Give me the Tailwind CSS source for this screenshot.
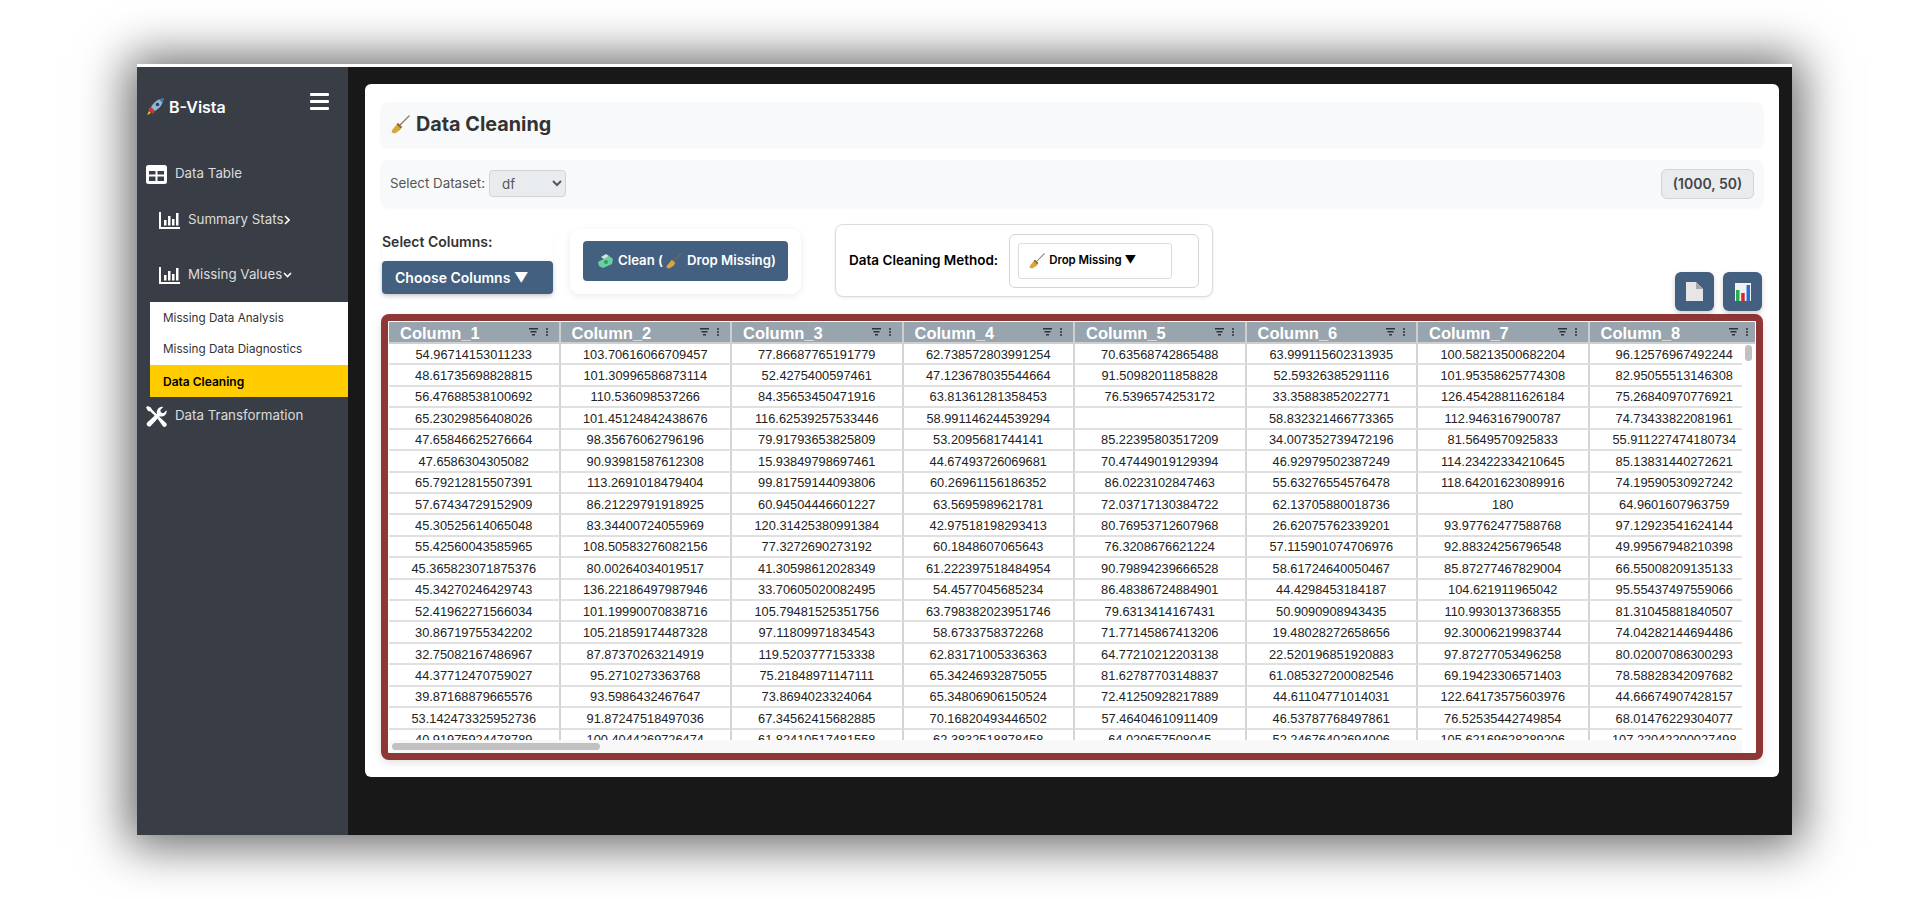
<!DOCTYPE html>
<html lang="en">
<head>
    <meta charset="UTF-8">
    <script src="https://cdn.jsdelivr.net/npm/@tailwindcss/browser@4"></script>
    <title>B-Vista</title>
</head>
<body class="bg-white font-['Inter',sans-serif] overflow-hidden">
    <div class="pt-[64px] pl-[137px] h-[899px]">
        <div class="w-[1655px] h-[771px] border-t-[3px] border-white flex shadow-[0_2px_45px_9px_rgba(0,0,0,0.6)]">

            <!-- Sidebar -->
            <aside class="w-[211px] bg-[#393e46] text-[#dcdcdc] text-[13.33px] shrink-0">
                <div class="h-[94px] pl-[9px] pr-[19px] flex items-start justify-between">
                    <div class="flex items-center gap-[5px] mt-[28px] text-white font-semibold text-[16px] leading-[24px]">
                        <svg class="w-[18px] h-[18px]" viewBox="0 0 18 18">
                            <path d="M2 11l3-2 4 4-2 3z" fill="#d8342c"/>
                            <path d="M1 17l2-4 2 2z" fill="#f6c21c"/>
                            <path d="M5 9C8 4 12 1 17.500 .5 17 6 14 10 9 13z" fill="#8fb8d8"/>
                            <path d="M13 1.500c1.500-.6 3-.9 4.500-1-.1 1.500-.4 3-1 4.500z" fill="#3c79b8"/>
                            <circle cx="11.500" cy="6.500" r="1.800" fill="#3b3f45"/>
                        </svg>
                        <span>B-Vista</span>
                    </div>
                    <svg class="w-[19px] h-[17px] mt-[26px]" viewBox="0 0 19 17" fill="#fff">
                        <rect y="0" width="19" height="3" rx="1"/><rect y="7" width="19" height="3" rx="1"/><rect y="14" width="19" height="3" rx="1"/>
                    </svg>
                </div>

                <div class="h-[26px] pl-[9px] flex items-center gap-[8px]">
                    <svg class="w-[21px] h-[19px]" viewBox="0 0 21 19" fill="#fff">
                        <path fill-rule="evenodd" d="M2.500 0h16A2.500 2.500 0 0 1 21 2.500v14a2.500 2.500 0 0 1-2.500 2.500h-16A2.500 2.500 0 0 1 0 16.500v-14A2.500 2.500 0 0 1 2.500 0zM3 6v3.500h6.500V6zm8.500 0v3.500H18V6zM3 11.500V16h6.500v-4.500zm8.500 0V16H18v-4.500z"/>
                    </svg>
                    <span>Data Table</span>
                </div>

                <div class="mt-[20px] h-[26px] pl-[22px] flex items-center gap-[8px]">
                    <svg class="w-[21px] h-[17px]" viewBox="0 0 21 17" fill="#fff">
                        <path d="M0 0h2v15h19v2H0z"/><rect x="5" y="8" width="2.500" height="5.500"/><rect x="9" y="4" width="2.500" height="9.500"/><rect x="13" y="7" width="2.500" height="6.500"/><rect x="17" y="1" width="2.500" height="12.500"/>
                    </svg>
                    <span>Summary Stats</span>
                    <svg class="w-[6px] h-[10px] -ml-[7px]" viewBox="0 0 6 10" fill="none" stroke="#fff" stroke-width="1.600"><path d="M1 1l4 4-4 4"/></svg>
                </div>

                <div class="mt-[29px] h-[26px] pl-[22px] flex items-center gap-[8px]">
                    <svg class="w-[21px] h-[17px]" viewBox="0 0 21 17" fill="#fff">
                        <path d="M0 0h2v15h19v2H0z"/><rect x="5" y="8" width="2.500" height="5.500"/><rect x="9" y="4" width="2.500" height="9.500"/><rect x="13" y="7" width="2.500" height="6.500"/><rect x="17" y="1" width="2.500" height="12.500"/>
                    </svg>
                    <span>Missing Values</span>
                    <svg class="w-[9px] h-[6px] -ml-[7px]" viewBox="0 0 9 6" fill="none" stroke="#fff" stroke-width="1.600"><path d="M1 1l3.500 3.500L8 1"/></svg>
                </div>

                <div class="ml-[13px] mt-[14px] text-[11.7px] text-[#333]">
                    <div class="h-[32px] pl-[13px] pt-px bg-white flex items-center">Missing Data Analysis</div>
                    <div class="h-[31px] pl-[13px] pt-px bg-white flex items-center">Missing Data Diagnostics</div>
                    <div class="h-[32px] pl-[13px] pt-px bg-[#ffcc00] text-black text-[12px] font-semibold flex items-center">Data Cleaning</div>
                </div>

                <div class="mt-[6px] h-[26px] pl-[9px] flex items-center gap-[8px]">
                    <svg class="w-[21px] h-[21px]" viewBox="0 0 21 21" fill="#fff">
                        <path d="M1.500 0L0 1.500 2 5l2.500.5 5 5 1.700-1.700-5-5L4.800 1.500z"/>
                        <path d="M11.500 12.500l1.800-1.800 7 6.500a2.300 2.300 0 0 1-3.200 3.200z"/>
                        <path d="M20.500 4.200l-3 3-2.600-.6-.6-2.600 3-3A5.200 5.200 0 0 0 11 7.500L1 16.800A2.600 2.600 0 0 0 4.500 20.300L13.800 10.300A5.200 5.200 0 0 0 20.500 4.200z"/>
                    </svg>
                    <span>Data Transformation</span>
                </div>
            </aside>

            <!-- Main -->
            <main class="flex-1 bg-[#181818] pl-[17px] pr-[13px] pt-[17px]">
                <div class="w-[1414px] h-[693px] bg-white rounded-[6px] px-[16px] pt-[18px]">

                    <div class="h-[45px] bg-[#f8f9fa] rounded-[8px] shadow-[0_1px_3px_rgba(0,0,0,0.05)] pl-[10px] flex items-center gap-[6px]">
                        <svg class="w-[19px] h-[19px]" viewBox="0 0 19 19">
                            <path d="M8 11L18.500 .5" stroke="#8a7a66" stroke-width="1.200"/>
                            <path d="M7 8l4 4-2 3-5 3.500-3.500-1 1-3z" fill="#d9a63c"/>
                            <path d="M7 8l4 4-1.200 1.600-4.300-4.300z" fill="#8c6a2c"/>
                        </svg>
                        <h1 class="text-[19.8px] font-bold text-[#333]">Data Cleaning</h1>
                    </div>

                    <div class="mt-[13px] h-[47px] bg-[#f8f9fa] rounded-[8px] shadow-[0_1px_3px_rgba(0,0,0,0.05)] pl-[9px] pr-[9px] flex items-center text-[13.33px] text-[#555]">
                        <span>Select Dataset:</span>
                        <select class="ml-[4px] w-[77px] h-[27px] pl-[8px] bg-[#e9ecef] border border-[#ced4da] rounded-[4px] text-[13.33px] text-[#555]">
                            <option>df</option>
                        </select>
                        <div class="ml-auto w-[93px] h-[30px] bg-[#e9ecef] border border-[#ced4da] rounded-[6px] flex items-center justify-center text-[14px] font-semibold text-[#444]">(1000, 50)</div>
                    </div>

                    <div class="mt-[17px] h-[90px] flex items-start">
                        <div class="ml-px w-[171px] mt-[8px] shrink-0 rounded-[6px] shadow-[0_1px_3px_rgba(0,0,0,0.05)]">
                            <div class="h-[20px] text-[14px] leading-[20px] font-semibold text-[#333]">Select Columns:</div>
                            <button class="mt-[9px] w-[171px] h-[33px] pl-[13px] bg-[#436080] rounded-[4px] shadow-[0_2px_5px_rgba(0,0,0,0.2)] text-white text-left text-[14px] font-semibold">Choose Columns ▼</button>
                        </div>

                        <div class="ml-[17px] mt-[5px] w-[231px] h-[65px] rounded-[10px] shadow-[0_2px_8px_rgba(0,0,0,0.08)] px-[13px] pt-[12px]">
                            <button class="w-[205px] h-[40px] bg-[#436080] rounded-[4px] text-white text-[13.2px] font-semibold flex items-center pl-[14px]">
                                <svg class="w-[17px] h-[15px] mr-[4px]" viewBox="0 0 17 15">
                                    <path d="M1 8l11-6 4 3-1 5-9 4-4-2z" fill="#66d19e"/>
                                    <path d="M4 3l5-3 3 2-5 3z" fill="#cfe8dc"/>
                                    <circle cx="9" cy="8" r="2" fill="#3a9a6c"/>
                                </svg>
                                <span>Clean (</span>
                                <svg class="w-[16px] h-[16px] mx-[3px]" viewBox="0 0 19 19">
                                    <path d="M8 11L18.500 .5" stroke="#6f6a60" stroke-width="1.200"/>
                                    <path d="M7 8l4 4-2 3-5 3.500-3.500-1 1-3z" fill="#d9a63c"/>
                                </svg>
                                <span class="ml-[2px]">Drop Missing)</span>
                            </button>
                        </div>

                        <div class="ml-[34px] w-[378px] h-[73px] bg-white border border-[#dcdcdc] rounded-[8px] shadow-[0_1px_3px_rgba(0,0,0,0.08)] pl-[13px] flex items-center">
                            <span class="text-[13.5px] font-semibold text-black">Data Cleaning Method:</span>
                            <div class="ml-[11px] w-[190px] h-[54px] border border-[#d4d4d4] rounded-[6px] pl-[8px] flex items-center">
                                <div class="w-[154px] h-[36px] border border-[#dcdcdc] rounded-[3px] pl-[10px] flex items-center gap-[4px] text-[11.4px] font-semibold text-black">
                                    <svg class="w-[16px] h-[16px]" viewBox="0 0 19 19">
                                        <path d="M8 11L18.500 .5" stroke="#8a7a66" stroke-width="1.200"/>
                                        <path d="M7 8l4 4-2 3-5 3.500-3.500-1 1-3z" fill="#d9a63c"/>
                                        <path d="M7 8l4 4-1.200 1.600-4.300-4.300z" fill="#8c6a2c"/>
                                    </svg>
                                    <span>Drop Missing ▼</span>
                                </div>
                            </div>
                        </div>

                        <div class="ml-auto mr-px mt-[48px] flex gap-[9px]">
                            <button class="w-[39px] h-[39px] bg-[#436080] rounded-[6px] shadow-[0_2px_5px_rgba(0,0,0,0.2)] flex items-center justify-center">
                                <svg class="w-[17px] h-[19px]" viewBox="0 0 17 19">
                                    <path d="M0 0h10l7 7v12H0z" fill="#e6e6e6"/>
                                    <path d="M10 0l7 7h-7z" fill="#a8a8a8"/>
                                </svg>
                            </button>
                            <button class="w-[39px] h-[39px] bg-[#436080] rounded-[6px] shadow-[0_2px_5px_rgba(0,0,0,0.2)] flex items-center justify-center">
                                <svg class="w-[16px] h-[18px]" viewBox="0 0 16 18">
                                    <rect width="16" height="18" fill="#f2f2f2"/>
                                    <rect x="1" y="7" width="3.500" height="11" fill="#27b04a"/>
                                    <rect x="6.200" y="10" width="3.500" height="8" fill="#d42a2a"/>
                                    <rect x="11.500" y="2" width="3.500" height="16" fill="#2a6fd4"/>
                                </svg>
                            </button>
                        </div>
                    </div>

                    <!-- Table -->
                    <div class="w-[1382px] h-[446px] border-[7px] border-[#8f3636] rounded-[8px] bg-white shadow-[0_3px_8px_rgba(0,0,0,0.12)]">
                        <div class="w-[1368px] h-[432px] pl-px pt-px overflow-hidden" >
                            <div id="gridHead" class="w-[1366px] h-[22px] overflow-hidden flex"></div>
                            <div class="flex h-[396px]">
                                <div id="gridBody" class="w-[1353px] overflow-hidden"></div>
                                <div class="w-[13px] pl-[3px] pt-px">
                                    <div class="w-[7px] h-[16px] rounded-full bg-[#c1c1c1]"></div>
                                </div>
                            </div>
                            <div class="w-[1353px] h-[13px] bg-[#f8f8f8] pl-[3px] pt-[3px]">
                                <div class="w-[208px] h-[7px] rounded-full bg-[#c1c1c1]"></div>
                            </div>
                        </div>
                    </div>
                </div>
            </main>
        </div>
    </div>

    <script>
        const rows = [
            ['54.96714153011233','103.70616066709457','77.86687765191779','62.738572803991254','70.63568742865488','63.999115602313935','100.58213500682204','96.12576967492244'],
            ['48.61735698828815','101.30996586873114','52.4275400597461','47.123678035544664','91.50982011858828','52.59326385291116','101.95358625774308','82.95055513146308'],
            ['56.47688538100692','110.536098537266','84.35653450471916','63.81361281358453','76.5396574253172','33.35883852022771','126.45428811626184','75.26840970776921'],
            ['65.23029856408026','101.45124842438676','116.62539257533446','58.991146244539294','','58.832321466773365','112.9463167900787','74.73433822081961'],
            ['47.65846625276664','98.35676062796196','79.91793653825809','53.2095681744141','85.22395803517209','34.007352739472196','81.5649570925833','55.911227474180734'],
            ['47.6586304305082','90.93981587612308','15.93849798697461','44.67493726069681','70.47449019129394','46.92979502387249','114.23422334210645','85.13831440272621'],
            ['65.79212815507391','113.2691018479404','99.81759144093806','60.26961156186352','86.0223102847463','55.63276554576478','118.64201623089916','74.19590530927242'],
            ['57.67434729152909','86.21229791918925','60.94504446601227','63.5695989621781','72.03717130384722','62.13705880018736','180','64.9601607963759'],
            ['45.30525614065048','83.34400724055969','120.31425380991384','42.97518198293413','80.76953712607968','26.62075762339201','93.97762477588768','97.12923541624144'],
            ['55.42560043585965','108.50583276082156','77.3272690273192','60.1848607065643','76.3208676621224','57.115901074706976','92.88324256796548','49.99567948210398'],
            ['45.365823071875376','80.00264034019517','41.30598612028349','61.222397518484954','90.79894239666528','58.61724640050467','85.87277467829004','66.55008209135133'],
            ['45.34270246429743','136.22186497987946','33.70605020082495','54.4577045685234','86.48386724884901','44.4298453184187','104.621911965042','95.55437497559066'],
            ['52.41962271566034','101.19990070838716','105.79481525351756','63.798382023951746','79.6313414167431','50.9090908943435','110.9930137368355','81.31045881840507'],
            ['30.86719755342202','105.21859174487328','97.11809971834543','58.6733758372268','71.77145867413206','19.48028272658656','92.30006219983744','74.04282144694486'],
            ['32.75082167486967','87.87370263214919','119.5203777153338','62.83171005336363','64.77210212203138','22.520196851920883','97.87277053496258','80.02007086300293'],
            ['44.37712470759027','95.2710273363768','75.21848971147111','65.34246932875055','81.62787703148837','61.085327200082546','69.19423306571403','78.58828342097682'],
            ['39.87168879665576','93.5986432467647','73.8694023324064','65.34806906150524','72.41250928217889','44.61104771014031','122.64173575603976','44.66674907428157'],
            ['53.142473325952736','91.87247518497036','67.34562415682885','70.16820493446502','57.46404610911409','46.53787768497861','76.52535442749854','68.01476229304077'],
            ['40.91975924478789','100.4044269726474','61.82410517481558','62.3832518878458','64.020657508045','52.24676402694006','105.62169628289206','107.22042200027498']
        ];

        // Render header
        const head = document.getElementById('gridHead');
        for (let i = 1; i <= 8; i++) {
            head.innerHTML += `
                <div class="w-[171.5px] shrink-0 h-[22px] bg-[#98a4ae] border-r-2 border-b-2 border-[#cfcfcf] pl-[11px] pr-[10px] flex items-center justify-between text-white font-['Liberation_Sans',sans-serif] font-bold text-[16.5px]">
                    <span class="pt-[2px]">Column_${i}</span>
                    <svg class="w-[20px] h-[9px]" viewBox="0 0 20 9" fill="#2d3338">
                        <path d="M0 0h9v1.500H0zM1.500 3h6v1.500h-6zM3 6h3v1.500H3z"/>
                        <circle cx="18" cy="1" r="1"/><circle cx="18" cy="4" r="1"/><circle cx="18" cy="7" r="1"/>
                    </svg>
                </div>`;
        }

        // Render rows
        const body = document.getElementById('gridBody');
        body.innerHTML = rows.map(row => `
            <div class="flex h-[21.43px]">
                ${row.map(val => `<div class="w-[171.5px] shrink-0 pt-px border-r-2 border-b-2 border-r-[#d4d4d4] border-b-[#e0e0e0] flex items-center justify-center text-[12.8px] text-[#222] font-['Liberation_Sans',sans-serif]">${val}</div>`).join('')}
            </div>`).join('');
    </script>
</body>
</html>
